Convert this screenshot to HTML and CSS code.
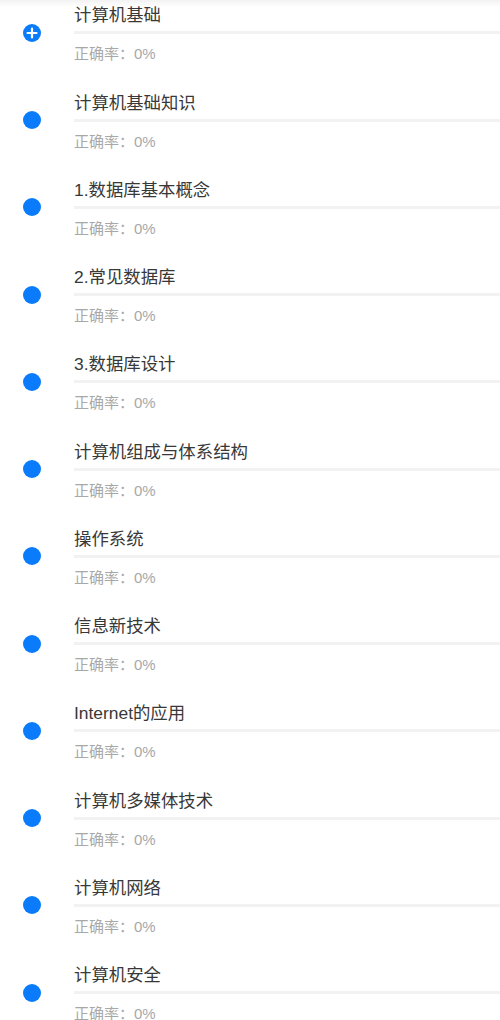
FILE: index.html
```html
<!DOCTYPE html>
<html lang="zh-CN">
<head>
    <meta charset="UTF-8">
    <meta name="viewport" content="width=device-width, initial-scale=1.0">
    <title>章节练习</title>
    <link rel="stylesheet" href="styles.css">
</head>
<body>
    <div class="top-shade"></div>
    <ul class="chapter-list">
        <li class="chapter">
            <span class="dot dot-open">
                <svg viewBox="0 0 18 18" width="18" height="18"><path d="M9 4.5v9M4.5 9h9" stroke="#fff" stroke-width="2.2" stroke-linecap="round"/></svg>
            </span>
            <div class="chapter-info">
                <p class="chapter-name">计算机基础</p>
                <div class="bar"></div>
                <p class="chapter-rate">正确率：0%</p>
            </div>
        </li>
        <li class="chapter">
            <span class="dot"></span>
            <div class="chapter-info">
                <p class="chapter-name">计算机基础知识</p>
                <div class="bar"></div>
                <p class="chapter-rate">正确率：0%</p>
            </div>
        </li>
        <li class="chapter">
            <span class="dot"></span>
            <div class="chapter-info">
                <p class="chapter-name">1.数据库基本概念</p>
                <div class="bar"></div>
                <p class="chapter-rate">正确率：0%</p>
            </div>
        </li>
        <li class="chapter">
            <span class="dot"></span>
            <div class="chapter-info">
                <p class="chapter-name">2.常见数据库</p>
                <div class="bar"></div>
                <p class="chapter-rate">正确率：0%</p>
            </div>
        </li>
        <li class="chapter">
            <span class="dot"></span>
            <div class="chapter-info">
                <p class="chapter-name">3.数据库设计</p>
                <div class="bar"></div>
                <p class="chapter-rate">正确率：0%</p>
            </div>
        </li>
        <li class="chapter">
            <span class="dot"></span>
            <div class="chapter-info">
                <p class="chapter-name">计算机组成与体系结构</p>
                <div class="bar"></div>
                <p class="chapter-rate">正确率：0%</p>
            </div>
        </li>
        <li class="chapter">
            <span class="dot"></span>
            <div class="chapter-info">
                <p class="chapter-name">操作系统</p>
                <div class="bar"></div>
                <p class="chapter-rate">正确率：0%</p>
            </div>
        </li>
        <li class="chapter">
            <span class="dot"></span>
            <div class="chapter-info">
                <p class="chapter-name">信息新技术</p>
                <div class="bar"></div>
                <p class="chapter-rate">正确率：0%</p>
            </div>
        </li>
        <li class="chapter">
            <span class="dot"></span>
            <div class="chapter-info">
                <p class="chapter-name">Internet的应用</p>
                <div class="bar"></div>
                <p class="chapter-rate">正确率：0%</p>
            </div>
        </li>
        <li class="chapter">
            <span class="dot"></span>
            <div class="chapter-info">
                <p class="chapter-name">计算机多媒体技术</p>
                <div class="bar"></div>
                <p class="chapter-rate">正确率：0%</p>
            </div>
        </li>
        <li class="chapter">
            <span class="dot"></span>
            <div class="chapter-info">
                <p class="chapter-name">计算机网络</p>
                <div class="bar"></div>
                <p class="chapter-rate">正确率：0%</p>
            </div>
        </li>
        <li class="chapter">
            <span class="dot"></span>
            <div class="chapter-info">
                <p class="chapter-name">计算机安全</p>
                <div class="bar"></div>
                <p class="chapter-rate">正确率：0%</p>
            </div>
        </li>
    </ul>
</body>
</html>
```

FILE: styles.css
```css
* {
    margin: 0;
    padding: 0;
    box-sizing: border-box;
    font-family: 'Liberation Sans', 'Noto Sans CJK SC', sans-serif;
}
body {
    background-color: #fff;
    color: #333;
    overflow: hidden;
}
.top-shade {
    position: fixed;
    top: 0;
    left: 0;
    right: 0;
    height: 7px;
    background: linear-gradient(rgba(0, 0, 0, 0.05), rgba(0, 0, 0, 0));
}
.chapter-list {
    list-style: none;
    margin-top: -10.8px;
}
.chapter {
    height: 87.25px;
    display: flex;
    align-items: center;
    padding-left: 22.5px;
}
.dot {
    width: 18px;
    height: 18px;
    border-radius: 50%;
    background-color: #0a7cfb;
    flex-shrink: 0;
    display: flex;
}
.chapter-info {
    flex: 1;
    margin-left: 33.5px;
    padding-top: 2px;
}
.chapter-name {
    font-size: 17.4px;
    line-height: 24px;
    color: #383838;
}
.bar {
    height: 3px;
    margin-top: 4px;
    background-color: #f2f2f2;
}
.chapter-rate {
    font-size: 15px;
    line-height: 20px;
    margin-top: 10px;
    color: #a8a8a8;
}
```
